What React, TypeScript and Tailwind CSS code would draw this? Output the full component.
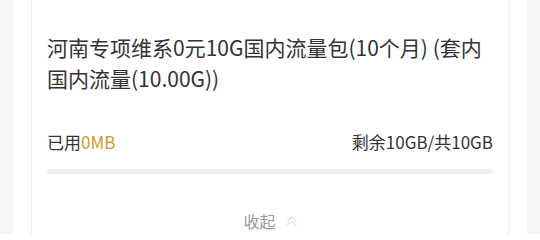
import React from "react";

const DoubleUp = () => (
  <svg width="11" height="10" viewBox="0 0 11 10" fill="none" stroke="#cfcfcf" strokeWidth="1">
    <path d="M1 5.5 L5.5 1 L10 5.5" />
    <path d="M1 9.5 L5.5 5 L10 9.5" />
  </svg>
);

const App = () => {
  return (
    <div
      className="h-[234px] w-[540px] overflow-hidden bg-[#f5f5f5] px-[13px]"
      style={{ fontFamily: '"Noto Sans CJK SC", "Noto Sans", sans-serif' }}
    >
      <div className="h-full bg-white px-[18px]">
        <div className="h-full border-x border-[#ececf0] px-[15px] pt-[32px]">
          <h2 className="text-[21px] leading-[31px] text-[#333333]">
            河南专项维系0元10G国内流量包(10个月) (套内国内流量(10.00G))
          </h2>
          <div className="mt-[36px] flex items-center justify-between text-[17px] leading-[24px]">
            <span className="text-[#333333]">
              已用<span className="text-[#cf9a2c]">0MB</span>
            </span>
            <span className="text-[#333333]">剩余10GB/共10GB</span>
          </div>
          <div className="mt-[15px] h-[5px] w-full rounded-full bg-[#eeeeee]" />
          <button className="mx-auto mt-[36px] flex items-center gap-[10px] text-[16px] leading-[22px] text-[#999999]">
            收起
            <DoubleUp />
          </button>
        </div>
      </div>
    </div>
  );
};

export default App;
